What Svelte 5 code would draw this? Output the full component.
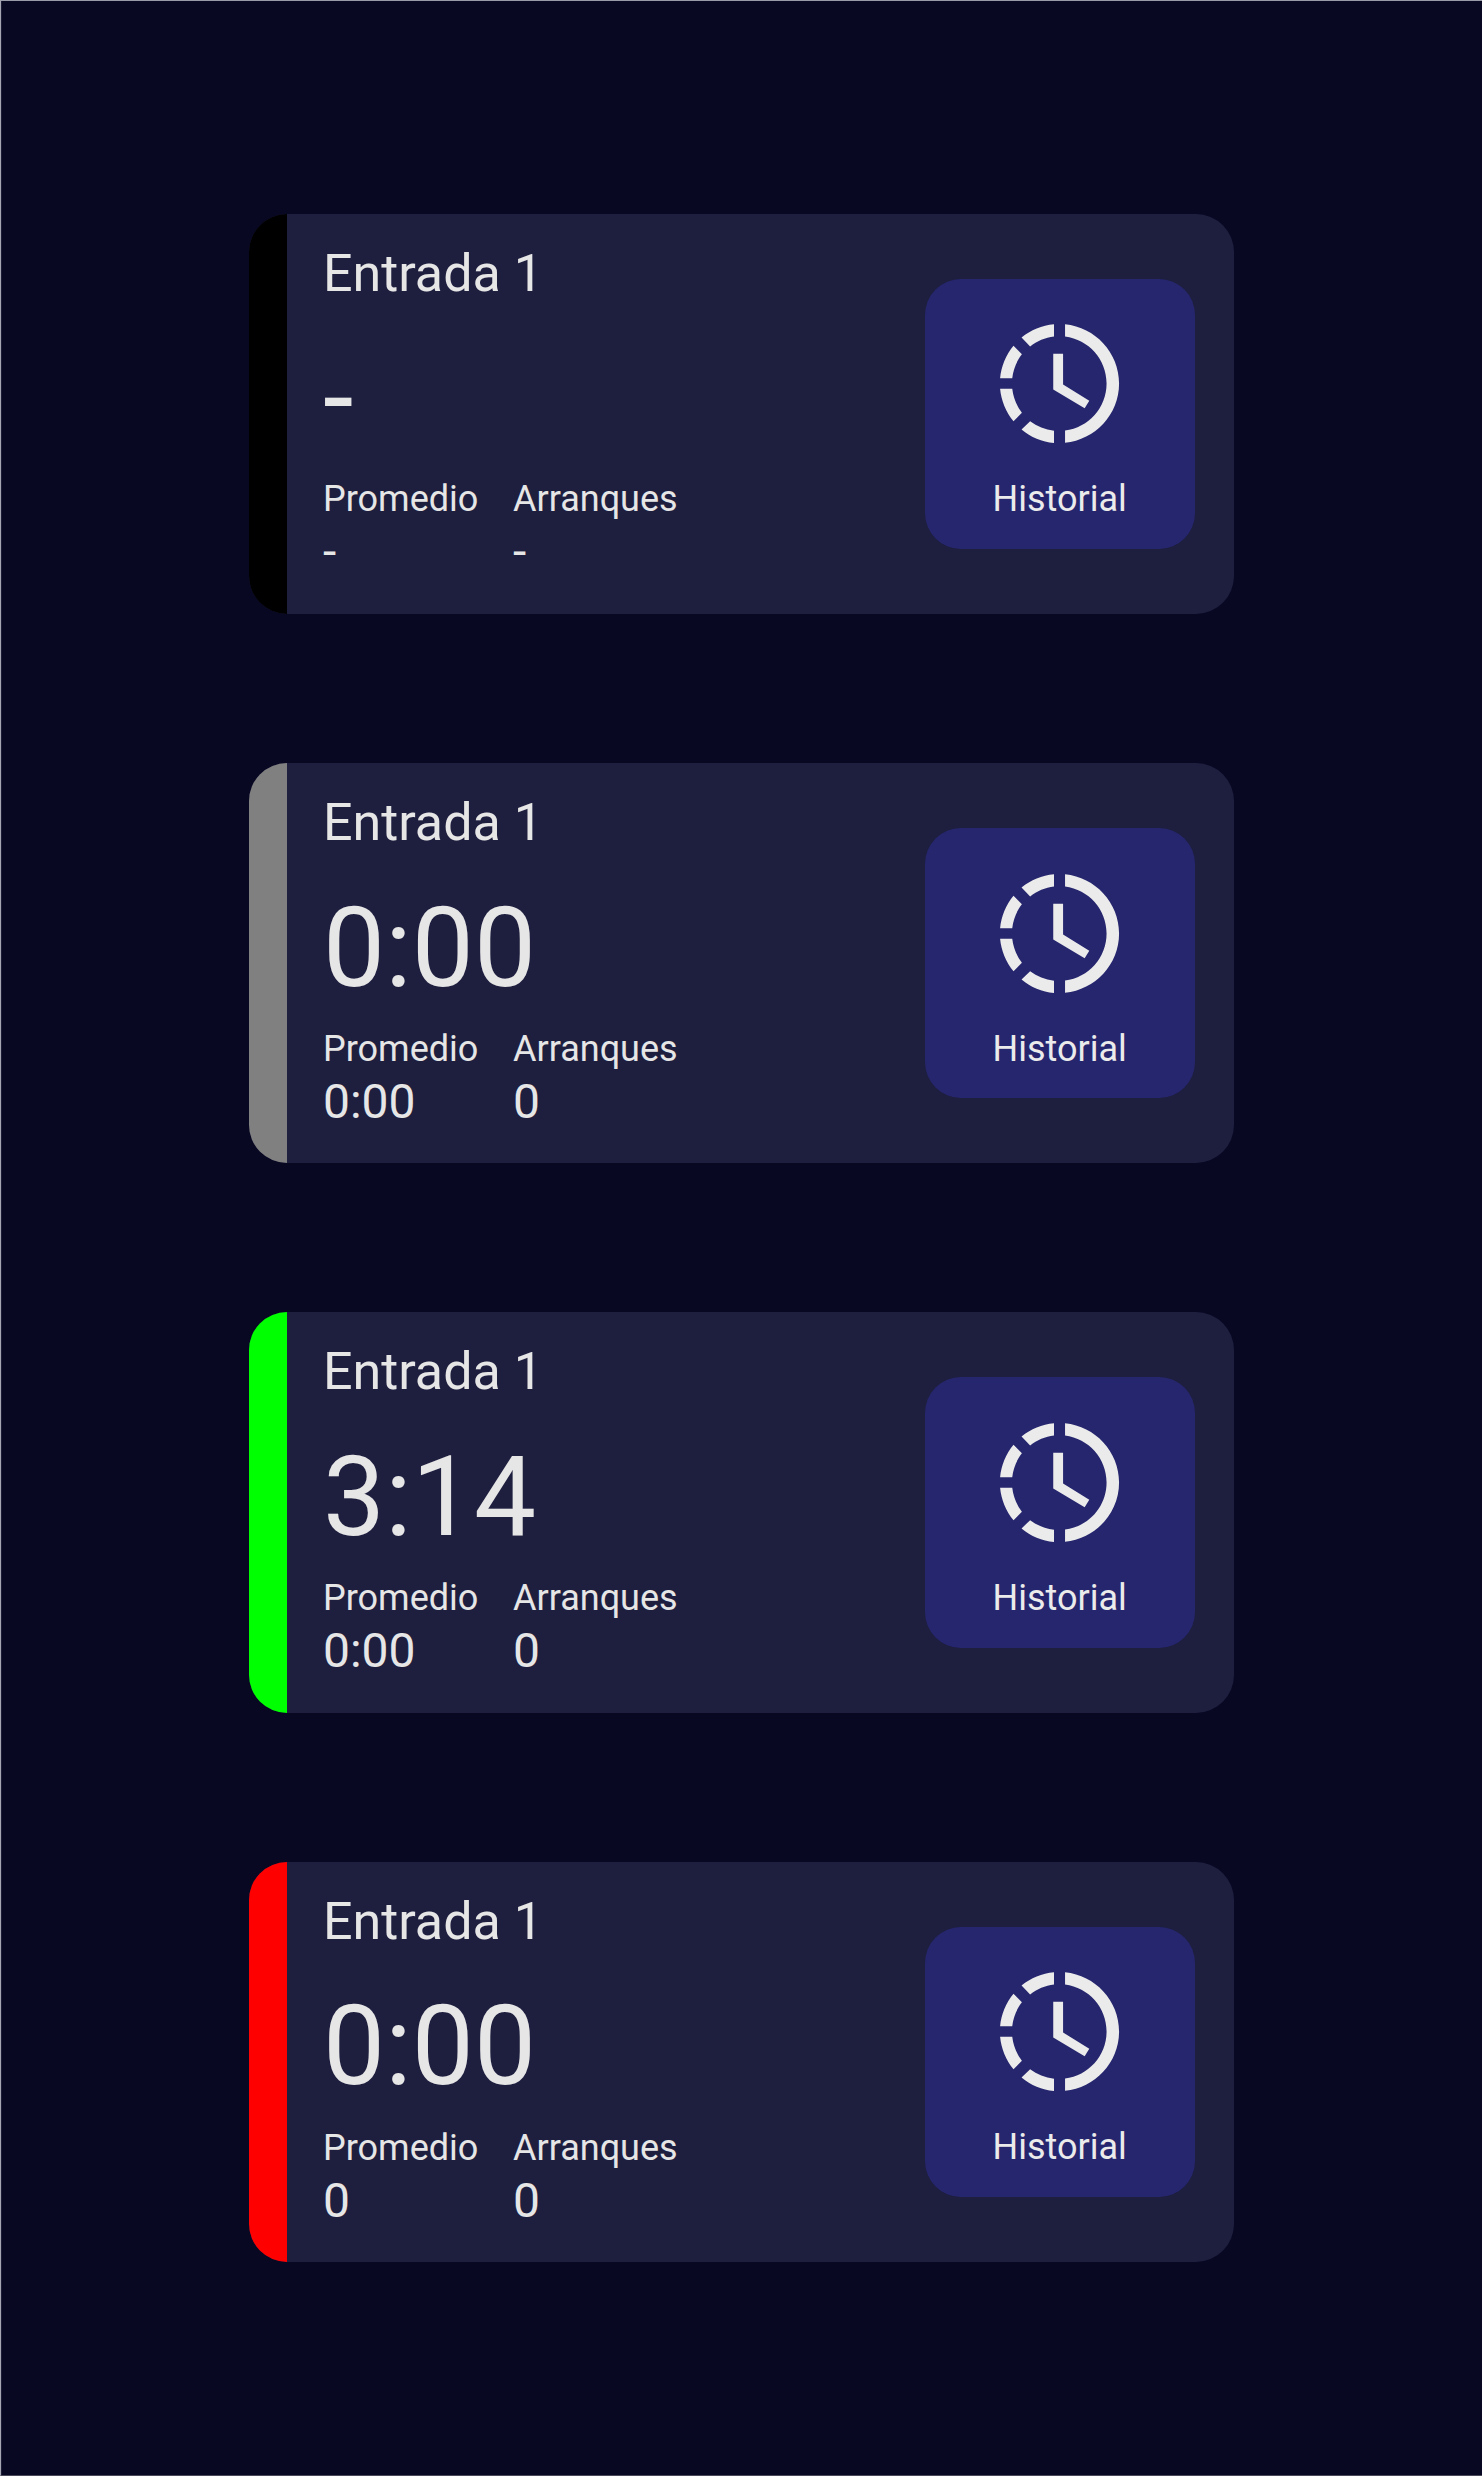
<script>
  const cards = [
    { state: 'off', time: '-', average: '-', starts: '-' },
    { state: 'idle', time: '0:00', average: '0:00', starts: '0' },
    { state: 'running', time: '3:14', average: '0:00', starts: '0' },
    { state: 'stopped', time: '0:00', average: '0', starts: '0' }
  ];
</script>

<main>
  {#each cards as card}
    <article class="card">
      <div class="status {card.state}"></div>
      <div class="info">
        <h2>Entrada 1</h2>
        <div class="time">{card.time}</div>
        <dl>
          <div><dt>Promedio</dt><dd>{card.average}</dd></div>
          <div><dt>Arranques</dt><dd>{card.starts}</dd></div>
        </dl>
      </div>
      <button type="button">
        <svg viewBox="0 0 24 24" aria-hidden="true">
          <path d="M12.93 2.05V4.1C16.9 4.6 19.9 7.95 19.9 12S16.9 19.4 12.93 19.9V21.95C18 21.45 22 17.2 22 12S18 2.55 12.93 2.05M11.08 2.06C9.05 2.25 7.19 3 5.63 4.3L7.07 5.78C8.22 4.87 9.6 4.26 11.08 4.1V2.06M4.28 5.65C3 7.19 2.22 9.1 2.03 11.1H4.07C4.24 9.62 4.8 8.23 5.69 7.1L4.28 5.65M2.03 12.9C2.22 14.9 3 16.81 4.28 18.35L5.69 16.9C4.8 15.77 4.24 14.38 4.07 12.9H2.03M7.07 18.32L5.63 19.7C7.19 21 9.05 21.8 11.08 21.97V19.92C9.6 19.74 8.22 19.2 7.07 18.32M12.6 7V12.15L17 14.88L16.22 16.17L10.95 13V7H12.6Z" />
        </svg>
        <span>Historial</span>
      </button>
    </article>
  {/each}
</main>

<style>
  :global(body) {
    background: #080823;
  }

  main {
    box-sizing: border-box;
    height: 2476px;
    padding: 212.7px 0 0 248.3px;
    border-top: 1px solid #9a9ba8;
    border-left: 1px solid #a5a6b2;
    border-bottom: 1px solid #49495a;
    box-shadow: inset 1px 0 #1c1c36;
    display: flex;
    flex-direction: column;
    gap: 149.4px;
    background: #080823;
    color: #e6e6e6;
    font-family: Roboto, sans-serif;
  }

  .card {
    display: flex;
    align-items: center;
    flex: none;
    width: 984.4px;
    height: 400.2px;
    border-radius: 38px;
    overflow: hidden;
    background: #1e1e3f;
  }

  .card + .card {
    margin-top: -0.2px;
  }

  .status {
    align-self: stretch;
    width: 38.2px;
  }

  .off { background: #000; }
  .idle { background: #808080; }
  .running { background: #0f0; }
  .stopped { background: #f00; }

  .info {
    align-self: stretch;
    flex: 1;
    padding: 29px 0 0 35.5px;
  }

  h2,
  dl,
  dd {
    margin: 0;
  }

  h2 {
    font-size: 52px;
    font-weight: 400;
    line-height: 61px;
  }

  .time {
    margin-top: 30.5px;
    font-size: 110.5px;
    line-height: 129px;
  }

  dl {
    display: flex;
    gap: 34.7px;
    margin-top: 15.3px;
  }

  dt {
    font-size: 36px;
    line-height: 42px;
  }

  dd {
    margin-top: 4px;
    font-size: 48px;
    line-height: 56px;
  }

  button {
    display: flex;
    flex-direction: column;
    align-items: center;
    width: 270.2px;
    height: 270.2px;
    margin: 0 39px 0 0;
    padding: 33.6px 0 0;
    border: 0;
    border-radius: 36px;
    background: #26266f;
    color: #ebebeb;
    font: 36px/42px Roboto, sans-serif;
  }

  svg {
    width: 143px;
    height: 143px;
    fill: currentColor;
  }

  span {
    margin-top: 22.9px;
  }
</style>
